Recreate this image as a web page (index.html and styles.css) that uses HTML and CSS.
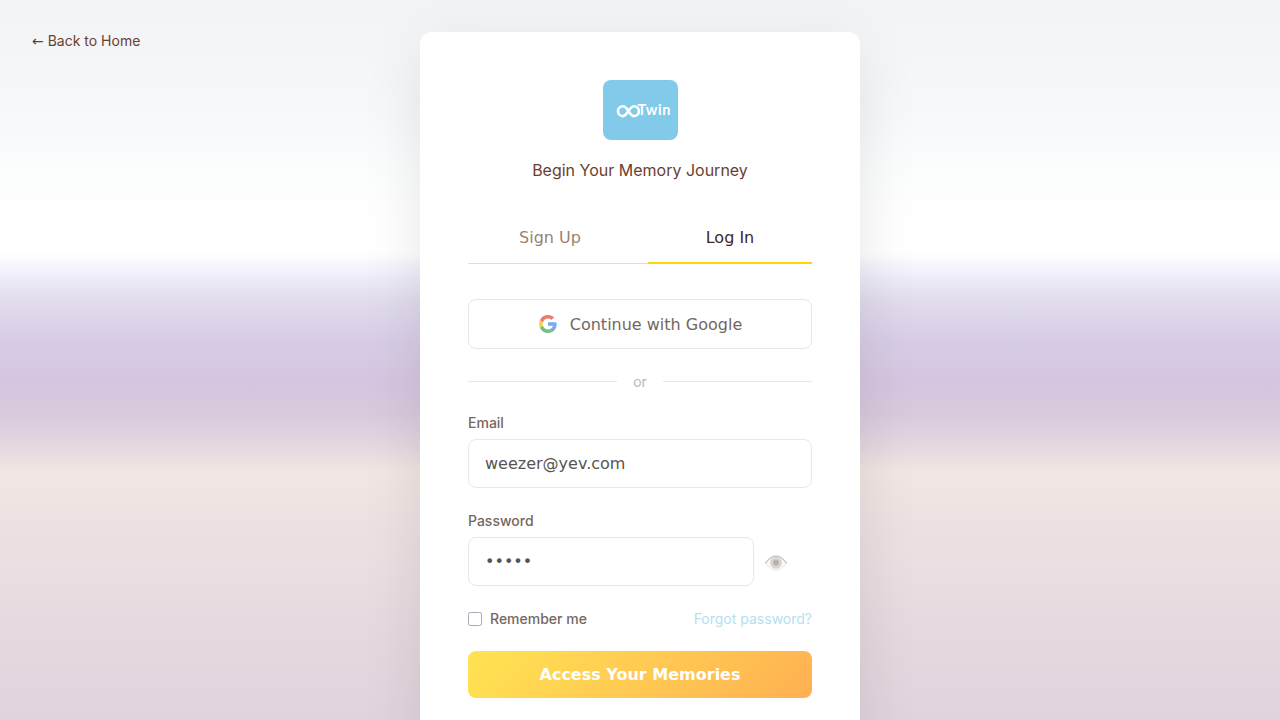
FILE: index.html
```html
<!DOCTYPE html>
<html lang="en">
<head>
<meta charset="utf-8">
<title>Twin – Log In</title>
<link rel="stylesheet" href="styles.css">
</head>
<body>
<a class="back" href="#"><span class="arrow">←</span> Back to Home</a>
<main class="card">
  <svg class="logo" viewBox="0 0 75 60" role="img" aria-label="Twin">
    <path d="M25.600 31.200C23.600 28 21.600 26.300 19.900 26.300a4.900 4.900 0 0 0 0 9.800C23.900 36.100 26.500 26.300 31 26.300a4.900 4.900 0 0 1 0 9.800C28.800 36.100 27.300 34.200 25.600 31.200Z" fill="none" stroke="#fff" stroke-width="2.600"/>
    <text class="logo-text" x="34.500" y="35.100" textLength="33">Twin</text>
  </svg>
  <p class="tagline">Begin Your Memory Journey</p>
  <div class="tabs">
    <button class="tab">Sign Up</button>
    <button class="tab active">Log In</button>
  </div>
  <button class="google">
    <svg class="google-icon" viewBox="0 0 18 18">
      <path fill="#4285F4" d="M17.640 9.200c0-.637-.057-1.251-.164-1.840H9v3.481h4.844a4.140 4.140 0 0 1-1.796 2.716v2.259h2.908c1.702-1.567 2.684-3.875 2.684-6.615z"/>
      <path fill="#34A853" d="M9 18c2.430 0 4.467-.806 5.956-2.184l-2.908-2.259c-.806.540-1.837.860-3.048.860-2.344 0-4.328-1.584-5.036-3.711H.957v2.332A8.997 8.997 0 0 0 9 18z"/>
      <path fill="#FBBC05" d="M3.964 10.706A5.410 5.410 0 0 1 3.682 9c0-.593.102-1.170.282-1.706V4.962H.957A8.996 8.996 0 0 0 0 9c0 1.452.348 2.827.957 4.038z"/>
      <path fill="#EA4335" d="M9 3.580c1.321 0 2.508.454 3.440 1.345l2.582-2.580C13.463.891 11.426 0 9 0A8.997 8.997 0 0 0 .957 4.962l3.007 2.332C4.672 5.167 6.656 3.580 9 3.580z"/>
    </svg>
    <span>Continue with Google</span>
  </button>
  <div class="divider"><span>or</span></div>
  <form class="form">
    <label class="label" for="email">Email</label>
    <input class="input email" id="email" type="text" value="weezer@yev.com">
    <label class="label" for="password">Password</label>
    <div class="password-row">
      <input class="input" id="password" type="password" value="12345">
      <svg class="eye" viewBox="0 0 22 16">
        <path d="M.8 8C4.500 2.200 7.800 1 11 1s6.500 1.200 10.200 7C17.500 13.500 14.300 15 11 15S4.500 13.500.8 8Z" fill="#fafafa" stroke="#d9dcde" stroke-width=".8"/>
        <circle cx="11" cy="7.800" r="6" fill="#e0d3cb"/>
        <circle cx="11" cy="7.800" r="3" fill="#b5b1af"/>
        <path d="M.5 8.500C4.200 2.500 7.600 1.100 11 1.100s6.800 1.400 10.500 7.400" fill="none" stroke="#c5c5c5" stroke-width="1.300"/>
      </svg>
    </div>
    <div class="options">
      <label class="remember"><input class="check" type="checkbox"><span class="option-text">Remember me</span></label>
      <a class="forgot option-text" href="#">Forgot password?</a>
    </div>
    <button class="submit" type="button">Access Your Memories</button>
  </form>
</main>
</body>
</html>
```
FILE: styles.css
```css
* { box-sizing: border-box; }
html { height: 100%; overflow: hidden; }
body {
  margin: 0;
  height: 720px;
  padding-top: 32px;
  overflow: hidden;
  font-family: Inter, sans-serif;
  font-size: 14px;
  background: linear-gradient(#f2f3f5 0, #f7f8fb 110px, #fcfdfd 175px, #fff 220px, #fff 253px, #f1eff9 273px, #e2dced 300px, #d8cde6 340px, #d5c6e0 382px, #d9cadd 414px, #e2d5df 440px, #f0e6e3 471px, #e6dae0 620px, #e0d3de 720px);
}
button, .input { font: 16px "DejaVu Sans", sans-serif; }
.back {
  position: absolute;
  left: 32px;
  top: 32px;
  line-height: 18px;
  color: #6b3e2e;
  text-decoration: none;
}
.arrow { font-family: "DejaVu Sans", sans-serif; line-height: 1; }
.card {
  width: 440px;
  min-height: 740px;
  margin: 0 auto;
  padding: 48px;
  border-radius: 12px;
  background: #fff;
  box-shadow: 0 20px 60px rgba(0, 0, 0, .1);
}
.logo {
  display: block;
  width: 75px;
  height: 60px;
  margin: 0 auto;
  position: relative;
  left: .5px;
  border-radius: 8px;
  background: #82caea;
}
.logo-text { font: 700 14.5px Lato, sans-serif; fill: #fff; }
.tagline {
  margin: 17px 0 36px;
  text-align: center;
  font-size: 16px;
  line-height: 26px;
  color: #6b3e2e;
}
.tabs {
  display: flex;
  gap: 16px;
  height: 45px;
  border-bottom: 1px solid #e0dcd6;
}
.tab {
  flex: 1;
  height: 45px;
  padding: 0 0 6px;
  border: 0;
  border-bottom: 2px solid transparent;
  background: none;
  color: #9b8270;
}
.tab.active { color: #3e2723; border-bottom-color: #ffd700; }
.google {
  display: flex;
  align-items: center;
  justify-content: center;
  gap: 12px;
  width: 100%;
  height: 50px;
  margin-top: 35px;
  padding: 0;
  border: 1px solid #eae7e1;
  border-radius: 8px;
  background: #fff;
  color: #746760;
}
.google-icon { width: 20px; height: 20px; padding: 1px; opacity: .7; }
.divider {
  display: flex;
  align-items: center;
  gap: 16px;
  height: 17px;
  margin: 24px 0 23px;
  color: #c4b5aa;
}
.divider::before, .divider::after {
  content: "";
  flex: 1;
  height: 1px;
  margin-bottom: 1px;
  background: #eae7e1;
}
.divider span { line-height: 17px; padding-bottom: 1px; }
.label {
  display: block;
  margin-bottom: 7px;
  line-height: 19px;
  font-weight: 500;
  color: #746760;
}
.input {
  display: block;
  width: 100%;
  height: 49px;
  padding: 0 16px;
  border: 1px solid #e9e7e5;
  border-radius: 8px;
  background: #fff;
  color: #555;
}
.email { margin-bottom: 23px; border-color: #eee7e1; }
.password-row { display: flex; align-items: center; gap: 11px; }
.password-row .input { width: 286px; }
.eye { width: 22px; height: 16px; margin-top: 2px; }
.options {
  display: flex;
  align-items: center;
  justify-content: space-between;
  height: 18px;
  margin: 24px 0 23px;
}
.option-text { padding-bottom: 2px; }
.remember { display: flex; align-items: center; gap: 8px; font-weight: 500; color: #746760; }
.check {
  appearance: none;
  width: 14px;
  height: 14px;
  margin: 0;
  border: 1px solid #aaa6b2;
  border-radius: 2.5px;
  background: #fff;
}
.forgot { color: #b4dff0; text-decoration: none; }
.submit {
  width: 100%;
  height: 47px;
  padding: 0;
  border: 0;
  border-radius: 8px;
  background: linear-gradient(135deg, #ffe452, #ffb052);
  color: #fff;
  font-weight: 700;
}
```
